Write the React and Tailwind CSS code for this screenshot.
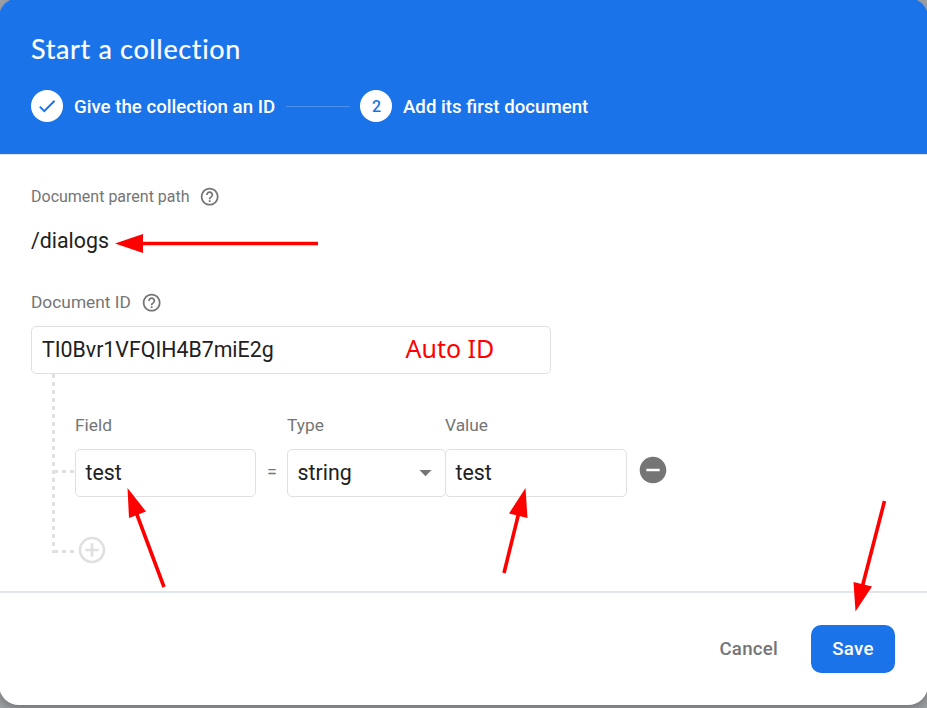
import {
  MdAddCircleOutline,
  MdArrowDropDown,
  MdCheck,
  MdHelpOutline,
  MdRemoveCircle,
} from "react-icons/md";

function Step({ badge, label, children }) {
  return (
    <div className="flex items-center">
      <span className="flex size-8 items-center justify-center rounded-full bg-white text-[16px] font-medium text-[#1a73e8]">
        {badge}
      </span>
      <span className="ml-[11px] pt-[2px] text-[18.67px] font-medium whitespace-nowrap">{label}</span>
      {children}
    </div>
  );
}

function Header() {
  return (
    <header className="h-[154px] shrink-0 bg-[#1a73e8] px-[31px] pt-[29px] text-white">
      <h1 className="h-10 font-['Lato',sans-serif] text-[27px] leading-10 tracking-[0.65px] whitespace-nowrap [-webkit-text-stroke:0.2px_white]">
        Start a collection
      </h1>
      <div className="mt-[21px] flex items-center">
        <div className="w-[329px]">
          <Step badge={<MdCheck size={22} />} label="Give the collection an ID">
            <span className="mr-[10px] ml-[11px] h-px flex-1 bg-[#4a90ed]" />
          </Step>
        </div>
        <Step badge={<span className="pt-px pl-px">2</span>} label="Add its first document" />
      </div>
    </header>
  );
}

function HelpLabel({ children }) {
  return (
    <div className="flex h-6 items-center whitespace-nowrap text-[#757575]">
      {children}
      <MdHelpOutline size={21.33} className="-ml-[0.3px]" />
    </div>
  );
}

function Column({ label, width, children }) {
  return (
    <div className={width}>
      <div className="h-6 text-[17.33px] leading-6 text-[#757575]">{label}</div>
      <div className="mt-3 flex h-12 items-center rounded-[5px] border border-[#e0e0e0] bg-white pl-[9.5px] text-[21.33px]">
        {children}
      </div>
    </div>
  );
}

function Arrows() {
  return (
    <svg
      className="pointer-events-none absolute inset-0"
      width="927"
      height="708"
      stroke="#f00"
      strokeWidth="3.6"
      fill="#f00"
    >
      <path d="M318 243.5H140M164 587L136 512M504 573L518.5 514M884.5 501L862.5 586" />
      <path
        stroke="none"
        d="M115 243.5L143 234V253ZM127.5 488L146 511.5L129 518ZM525.5 488L527.5 518L509 513.5ZM855.5 611.5L853.5 582L872 586.5Z"
      />
    </svg>
  );
}

export default function App() {
  return (
    <div className="relative h-[708px] w-[927px] overflow-hidden bg-[#a0a3a7] font-['Roboto',sans-serif] text-[#212121]">
      <div className="-mx-px -mt-[2px] flex h-[707px] flex-col overflow-hidden rounded-[20px] bg-white pt-0 shadow-[0_4px_12px_rgba(0,0,0,0.3)]">
        <div className="h-[2px] shrink-0 bg-[#1a73e8]" />
        <div className="flex flex-1 flex-col px-px">
          <div className="-mx-px bg-[#1a73e8] px-px">
            <Header />
          </div>
          <main className="h-[437px] border-t border-[#e0e3e8] pt-[30px] pl-[31px]">
            <HelpLabel>
              <span className="w-[168px] text-[16px]">Document parent path</span>
            </HelpLabel>
            <div className="mt-[16px] h-8 text-[21.33px] leading-8">/dialogs</div>
            <div className="mt-[34px]">
              <HelpLabel>
                <span className="w-[110px] text-[17.33px]">Document ID</span>
              </HelpLabel>
            </div>
            <div className="mt-[11px] flex h-12 w-[520px] items-center rounded-[5px] border border-[#e0e0e0] pl-[10px] text-[21.33px]">
              <span className="w-[363.5px]">TI0Bvr1VFQIH4B7miE2g</span>
              <span className="-mt-[2px] font-['Noto_Sans',sans-serif] text-[25px] whitespace-nowrap text-[#f00]">
                Auto ID
              </span>
            </div>
            <div className="ml-[21px] flex">
              <div className="h-[179px] w-[3px] bg-[repeating-linear-gradient(to_bottom,#e0e0e0_0_4px,transparent_4px_8px)]" />
              <div className="flex flex-col">
                <div className="flex pt-[39px]">
                  <div className="mt-[57px] h-[3px] w-5 bg-[repeating-linear-gradient(to_right,#e0e0e0_0_3px,transparent_3px_7px,#e0e0e0_7px_8px)] bg-[length:8px_3px]" />
                  <Column label="Field" width="w-[181px]">test</Column>
                  <div className="w-[31px] pt-[47px] pl-px text-center text-[18px] leading-6 text-[#757575]">
                    =
                  </div>
                  <Column label="Type" width="w-[159px]">
                    <span className="flex-1">string</span>
                    <MdArrowDropDown size={29} className="mr-[5.5px] -mt-px text-[#757575]" />
                  </Column>
                  <Column label="Value" width="-ml-px w-[182px]">test</Column>
                  <MdRemoveCircle size={32} className="mt-[41px] ml-[10.2px] text-[#757575]" />
                </div>
                <div className="mt-[37px] flex h-8 items-center">
                  <div className="mt-[3px] h-[3px] w-5 bg-[repeating-linear-gradient(to_right,#e0e0e0_0_3px,transparent_3px_7px,#e0e0e0_7px_8px)] bg-[length:8px_3px]" />
                  <MdAddCircleOutline size={32} className="ml-[1.2px] text-[#e0e0e0]" />
                </div>
              </div>
            </div>
          </main>
          <footer className="flex flex-1 items-center justify-end border-t-2 border-[#e2e6eb] pr-8 text-[18.67px] font-medium tracking-[0.25px]">
            <button className="mr-[33px] text-[#757575]">Cancel</button>
            <button className="h-12 w-[84px] rounded-[10px] bg-[#1a73e8] text-white">Save</button>
          </footer>
        </div>
      </div>
      <Arrows />
    </div>
  );
}
